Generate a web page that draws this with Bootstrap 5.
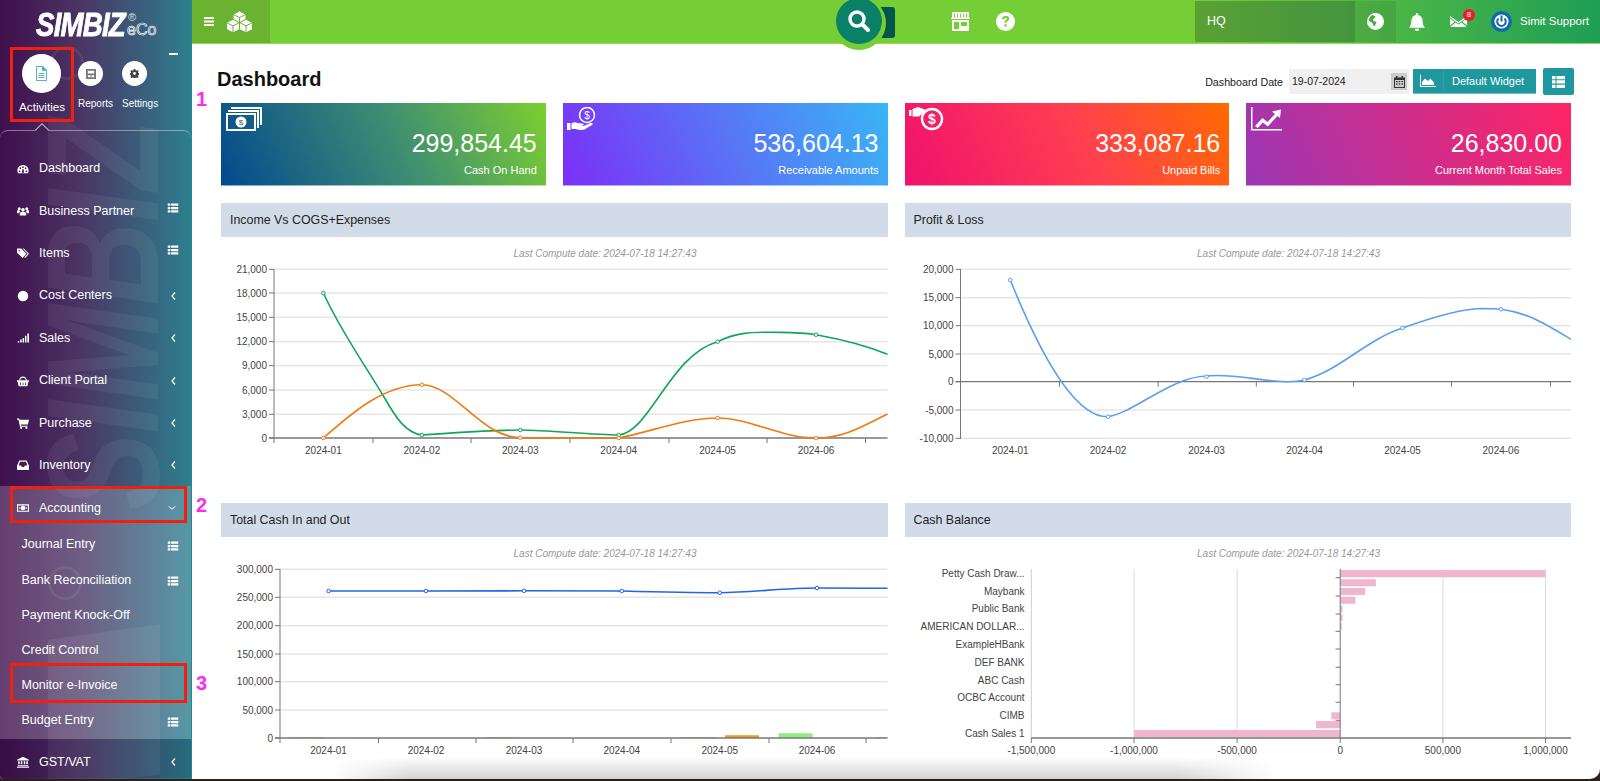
<!DOCTYPE html>
<html lang="en">
<head>
<meta charset="utf-8">
<title>Dashboard</title>
<link href="https://cdn.jsdelivr.net/npm/bootstrap@5.3.0/dist/css/bootstrap.min.css" rel="stylesheet">
<style>
html,body{height:781px;overflow:hidden;background:#2a2118;font-family:"Liberation Sans",Arial,sans-serif;}
svg{display:block;flex:none;}
.app-shell{height:779px;overflow:hidden;border-radius:0 0 10px 4px;background:#fff;}
.side-col{width:191px;flex:none;position:relative;overflow:hidden;color:#fff;background:linear-gradient(90deg,#3f0f4c 0%,#4a3564 42%,#2d7f8e 100%);}
.wm-word{position:absolute;left:23px;top:510px;font-size:160px;line-height:1;font-weight:700;font-style:italic;color:rgba(255,255,255,.06);transform-origin:0 0;transform:rotate(-90deg) scaleX(.72);white-space:nowrap;user-select:none;}
.wm-band{position:absolute;left:48px;top:632px;width:112px;height:150px;background:rgba(255,255,255,.07);transform:skewY(-8deg);}
.wm-ring{position:absolute;width:34px;height:34px;border-radius:50%;border:3px solid rgba(255,255,255,.07);}
.wm-ring-a{left:50px;top:46px;}
.wm-ring-b{left:48px;top:566px;}
.logo-wrap{height:47px;padding:9px 0 0 36px;position:relative;}
.logo-main{display:inline-block;font-size:33px;line-height:32px;font-weight:700;font-style:italic;letter-spacing:-1px;-webkit-text-stroke:.8px #fff;transform:scaleX(.84);transform-origin:0 0;}
.logo-eco{position:absolute;left:127px;top:21px;font-size:16px;line-height:17px;color:transparent;-webkit-text-stroke:.7px #fff;}
.logo-reg{position:absolute;left:128px;top:11px;font-size:11px;line-height:12px;color:#cfe3e6;}
.tab-row{padding-left:10px;height:75px;position:relative;}
.tab-on{width:64px;border:3px solid #f0200f;padding:4px 0 0 7px;}
.tab-off{padding-top:14px;}
.tab-round{background:#fff;border-radius:50%;display:flex;align-items:center;justify-content:center;}
.tab-big{width:39px;height:39px;margin-left:2px;}
.tab-small{width:25px;height:25px;}
.tab-lbl-big{font-size:11.7px;line-height:14px;margin-top:7px;margin-left:-1px;white-space:nowrap;}
.tab-lbl{font-size:10px;line-height:14px;margin-top:11px;white-space:nowrap;}
.tab-minus{width:8.5px;height:2px;background:#fff;margin:6px 0 0 10px;}
.menu-box{margin-top:8px;border-top:1px solid rgba(255,255,255,.4);border-radius:8px 8px 0 0;padding-top:15.5px;position:relative;}
.menu-box::before{content:"";position:absolute;left:36.5px;top:-6px;width:10px;height:10px;background:#42214f;border-left:1px solid rgba(255,255,255,.7);border-top:1px solid rgba(255,255,255,.7);transform:rotate(45deg);}
.menu-row{height:42.4px;padding:2px 12px 0 17px;font-size:12.5px;color:#fff;text-decoration:none;position:relative;}
.menu-row:hover{color:#fff;}
.menu-ico{width:12px;height:12px;margin-right:10px;}
.menu-end{margin-left:auto;}
.menu-row .menu-end{margin-bottom:7px;}
.sub-row .menu-end{margin-top:3px;}
.chev-end{margin-left:auto;margin-right:2px;}
.open-zone{background:rgba(255,255,255,.2);padding-bottom:2px;}
.menu-open{height:40px;padding-top:5px;}
.sub-row{height:35.2px;padding:3px 12px 0 21.5px;font-size:12.5px;color:#fff;text-decoration:none;position:relative;}
.sub-row:hover{color:#fff;}
.menu-last{height:39px;padding-top:8px;background:rgba(20,0,40,.15);}
.red-open::after,.red-sub::after{content:"";position:absolute;border:3px solid #ef2010;}
.red-open::after{inset:0 4.5px 2.4px 10px;}
.red-sub::after{inset:-3.7px 4.3px -1.2px 10px;}
.pink-num{position:absolute;left:196px;color:#fb2ee8;font-weight:700;font-size:20px;line-height:20px;z-index:5;}
.main-col{flex:1 1 auto;min-width:0;position:relative;border-left:1px solid #1e8a94;margin-left:0;}
.fade-low{position:absolute;left:0;right:0;bottom:0;height:22px;background:linear-gradient(to top,rgba(150,150,150,.42),rgba(150,150,150,0));-webkit-mask-image:linear-gradient(to right,transparent 10%,#000 15.500%,#000 70%,transparent 77%);mask-image:linear-gradient(to right,transparent 10%,#000 15.500%,#000 70%,transparent 77%);pointer-events:none;z-index:4;}
.top-strip{height:44px;color:#fff;background:linear-gradient(90deg,#76ce36 71%,#1f9e57 100%);border-bottom:1px solid #8ed85a;position:relative;}
.top-left{width:78px;height:43px;background:#6ab230;padding-left:12px;gap:12px;}
.top-hq{width:160px;height:41px;background:rgba(30,60,50,.3);font-size:12.5px;padding-left:12px;margin-left:180px;}
.top-globe{width:41px;height:41px;background:rgba(30,60,50,.12);}
.top-user{font-size:11.5px;margin-left:8px;white-space:nowrap;}
.env-wrap{position:relative;margin-left:24px;}
.env-badge{position:absolute;left:13px;top:-7px;width:12px;height:12px;border-radius:50%;background:#ee1c25;font-size:8px;line-height:12px;text-align:center;color:#fff;}
.search-disc{position:absolute;left:640px;top:-4px;width:54px;height:54px;border-radius:50%;background:#76ce36;z-index:3;}
.search-core{position:absolute;left:4px;top:2px;width:46px;height:46px;border-radius:50%;background:#0a8067;display:flex;align-items:center;justify-content:center;}
.search-tail{position:absolute;left:684px;top:7px;width:19px;height:31px;background:#03574a;border-radius:0 3px 3px 0;z-index:2;}
.page-body{padding:24px 29px 0 29px;}
.head-row{height:27px;margin-bottom:8px;}
.page-title{font-size:20px;font-weight:700;line-height:22px;margin:0 0 0 -4px;color:#111;}
.head-tools{margin-right:-3px;}
.date-lbl{font-size:10.7px;color:#222;margin-right:6px;margin-top:2px;}
.date-box{width:120px;height:25px;background:#f0f0f0;font-size:10.5px;color:#222;padding:0 2px 0 3px;}
.cal-sq{width:16px;height:17px;background:#ccc;margin-left:auto;display:flex;align-items:center;justify-content:center;}
.teal-btn{background:#1e979f;color:#fff;font-size:11px;height:25px;width:123px;margin-left:4px;border-bottom:1px solid #6fbcc2;}
.teal-ico{width:31px;height:24px;border-right:1px solid #2aa0a8;display:flex;align-items:center;justify-content:center;}
.teal-txt{padding-left:8px;white-space:nowrap;}
.teal-sq{width:31px;height:27px;background:#1e979f;border-radius:2px;margin-left:7px;display:flex;align-items:center;justify-content:center;}
.tight-row{--bs-gutter-x:17px;--bs-gutter-y:0;}
.stat-tile{height:83px;color:#fff;padding:4px 9px 0 4.5px;position:relative;border-bottom:1px solid rgba(255,255,255,.5);}
.tile-a{background:linear-gradient(65deg,#03498f,#3f8f72 55%,#7ccf2f);}
.tile-b{background:linear-gradient(65deg,#7b2ff7,#38b6f5);}
.tile-c{background:linear-gradient(65deg,#f0116e,#ff3f50 55%,#ff6a00);}
.tile-d{background:linear-gradient(65deg,#9b37b5,#ff2464);}
.tile-num{font-size:25px;line-height:30px;position:absolute;right:9px;top:25px;}
.tile-lbl{font-size:11px;line-height:14px;position:absolute;right:9px;top:60px;white-space:nowrap;}
.chart-title{height:34px;background:#d2dce8;font-size:12.4px;color:#222;padding-left:9px;margin-top:17px;}
.chart-area{width:100%;}
.ct{font-family:"Liberation Sans",Arial,sans-serif;font-size:10px;fill:#444;}
.cnote{font-family:"Liberation Sans",Arial,sans-serif;font-size:10px;font-style:italic;fill:#999;text-anchor:middle;}
</style>
</head>
<body>
<svg width="0" height="0" style="position:absolute">
<defs>
<symbol id="i-list" viewBox="0 0 16 16"><path fill="currentColor" d="M1 2h3.500v3H1zM5.500 2H15v3H5.500zM1 6.500h3.500v3H1zM5.500 6.500H15v3H5.500zM1 11h3.500v3H1zM5.500 11H15v3H5.500z"/></symbol>
<symbol id="i-gauge" viewBox="0 0 16 16"><path fill="currentColor" fill-rule="evenodd" d="M8 2.500a7.500 7.500 0 0 0-7.500 7.500c0 1.400.3 2.500.9 3.500h13.200c.6-1 .9-2.100.9-3.500A7.500 7.500 0 0 0 8 2.500zM7 4.500h2v2H7zM3.500 6h2v2h-2zM2.500 10h2v2h-2zM11.500 10h2v2h-2zM10.500 6h2v2h-2zM7.300 8h1.400l.8 5H6.500z"/></symbol>
<symbol id="i-users" viewBox="0 0 16 16"><path fill="currentColor" d="M8 4a2.400 2.400 0 1 1 0 4.800A2.400 2.400 0 0 1 8 4zM3 3a2 2 0 1 1 0 4 2 2 0 0 1 0-4zM13 3a2 2 0 1 1 0 4 2 2 0 0 1 0-4zM4.500 10c.7-.7 1.500-1 3.500-1s2.800.3 3.500 1c.6.600.8 2 .8 4H3.700c0-2 .2-3.400.8-4zM0 7.500c.5-.4 1.200-.5 3-.5.300.7.800 1.200 1.400 1.500C3.400 9 3 10 2.900 11H0zM16 7.500c-.5-.4-1.200-.5-3-.5-.3.7-.8 1.200-1.400 1.500 1 .5 1.400 1.500 1.500 2.500H16z"/></symbol>
<symbol id="i-tags" viewBox="0 0 16 16"><path fill="currentColor" fill-rule="evenodd" d="M0 2h5.500l7 7-5 5.500L0 7.500zM3 4a1 1 0 1 0 0 2 1 1 0 0 0 0-2zM7.500 2h1.500l7 7-5 5.500-1.200-1 4.200-4.500z"/></symbol>
<symbol id="i-dot" viewBox="0 0 16 16"><circle cx="8" cy="8" r="7" fill="currentColor"/></symbol>
<symbol id="i-signal" viewBox="0 0 16 16"><path fill="currentColor" d="M1 12h2v2H1zM4.200 10h2v4h-2zM7.400 8h2v6h-2zM10.600 5h2v9h-2zM13.800 2H16v12h-2.200z"/></symbol>
<symbol id="i-basket" viewBox="0 0 16 16"><path fill="currentColor" fill-rule="evenodd" d="M0 7h16v2h-1l-1.200 6H2.200L1 9H0zM4 10v3.500h1V10zM7.500 10v3.500h1V10zM11 10v3.500h1V10zM3 6.500C3.500 3.500 5.500 2 8 2s4.500 1.500 5 4.500h-1.500C11 4.500 9.800 3.500 8 3.500S5 4.500 4.500 6.500z"/></symbol>
<symbol id="i-cart" viewBox="0 0 16 16"><path fill="currentColor" d="M0 2h3l.4 1.500H16l-1.500 6.500H5l.3 1.500H14V13H4L2 3.500H0z"/><circle cx="5.500" cy="14.500" r="1.400" fill="currentColor"/><circle cx="12.500" cy="14.500" r="1.400" fill="currentColor"/></symbol>
<symbol id="i-inbox" viewBox="0 0 16 16"><path fill="currentColor" fill-rule="evenodd" d="M3 2h10l3 7v4.500a1 1 0 0 1-1 1H1a1 1 0 0 1-1-1V9zM4 3.500 2.200 8.500h3.300l1 2h3l1-2h3.300L12 3.500z"/></symbol>
<symbol id="i-money" viewBox="0 0 16 16"><path fill="currentColor" fill-rule="evenodd" d="M0 3h16v10H0zM1.500 4.500v7h13v-7zM8 5a3 3 0 1 1 0 6 3 3 0 0 1 0-6zM3 7h1.500v2H3zM11.500 7H13v2h-1.500z"/></symbol>
<symbol id="i-bank" viewBox="0 0 16 16"><path fill="currentColor" d="M8 1l8 4v1H0V5zM1.500 7h2v4h-2zM5 7h2v4H5zM9 7h2v4H9zM12.500 7h2v4h-2zM1 12h14v1H1zM0 14h16v1.500H0z"/></symbol>
<symbol id="i-back" viewBox="0 0 8 12"><path fill="none" stroke="currentColor" stroke-width="1.200" d="M6 2.500 3 6l3 3.500"/></symbol>
<symbol id="i-down" viewBox="0 0 12 8"><path fill="none" stroke="currentColor" stroke-width="1.200" d="M2 2l4 3.500L10 2"/></symbol>
</defs>
</svg>

<div class="app-shell d-flex">
  <aside class="side-col">
    <span class="wm-word" aria-hidden="true">SIMBIZ</span>
    <span class="wm-band"></span>
    <span class="wm-ring wm-ring-a"></span>
    <span class="wm-ring wm-ring-b"></span>
    <div class="logo-wrap">
      <span class="logo-main">SIMBIZ</span>
      <span class="logo-reg">®</span>
      <span class="logo-eco">eCo</span>
    </div>
    <div class="tab-row d-flex">
      <div class="tab-on d-flex flex-column align-items-start">
        <span class="tab-round tab-big">
          <svg width="13" height="15" viewBox="0 0 13 15"><path fill="#59b4c4" fill-rule="evenodd" d="M1 0h7l4 4v11H1zM2 1v13h9V5H7V1zM3.500 7v1h6V7zM3.500 9v1h6V9zM3.500 11v1h6v-1z"/></svg>
        </span>
        <span class="tab-lbl-big">Activities</span>
      </div>
      <div class="tab-off d-flex flex-column align-items-start ms-1" style="width:44px">
        <span class="tab-round tab-small">
          <svg width="10" height="10" viewBox="0 0 11 11"><path fill="#777" fill-rule="evenodd" d="M0 0h11v11H0zM2 2v3h7V2zM2 7v2h3V7zM6 7v2h3V7z"/></svg>
        </span>
        <span class="tab-lbl">Reports</span>
      </div>
      <div class="tab-off d-flex flex-column align-items-start" style="width:37px">
        <span class="tab-round tab-small">
          <svg width="9" height="9" viewBox="0 0 16 16"><path fill="#444" fill-rule="evenodd" d="M6.500 0h3l.4 2.300 1.500.6L13.300 1.600l2.100 2.100-1.300 1.900.6 1.500 2.300.4v3l-2.300.4-.6 1.500 1.300 1.900-2.100 2.100-1.900-1.300-1.500.6-.4 2.300h-3l-.4-2.300-1.500-.6-1.900 1.300L.6 14.300l1.300-1.900-.6-1.500L-1 10.500v-3l2.300-.4.6-1.500L.6 3.700 2.700 1.600l1.900 1.300 1.500-.6zM8 5.500a2.500 2.500 0 1 0 0 5 2.500 2.500 0 0 0 0-5z"/></svg>
        </span>
        <span class="tab-lbl">Settings</span>
      </div>
      <span class="tab-minus"></span>
    </div>
    <nav class="menu-box">
      <a class="menu-row d-flex align-items-center" href="#"><svg class="menu-ico"><use href="#i-gauge"/></svg>Dashboard</a>
      <a class="menu-row d-flex align-items-center" href="#"><svg class="menu-ico"><use href="#i-users"/></svg>Business Partner<svg class="menu-end" width="12" height="12"><use href="#i-list"/></svg></a>
      <a class="menu-row d-flex align-items-center" href="#"><svg class="menu-ico"><use href="#i-tags"/></svg>Items<svg class="menu-end" width="12" height="12"><use href="#i-list"/></svg></a>
      <a class="menu-row d-flex align-items-center" href="#"><svg class="menu-ico"><use href="#i-dot"/></svg>Cost Centers<svg class="chev-end" width="8" height="12"><use href="#i-back"/></svg></a>
      <a class="menu-row d-flex align-items-center" href="#"><svg class="menu-ico"><use href="#i-signal"/></svg>Sales<svg class="chev-end" width="8" height="12"><use href="#i-back"/></svg></a>
      <a class="menu-row d-flex align-items-center" href="#"><svg class="menu-ico"><use href="#i-basket"/></svg>Client Portal<svg class="chev-end" width="8" height="12"><use href="#i-back"/></svg></a>
      <a class="menu-row d-flex align-items-center" href="#"><svg class="menu-ico"><use href="#i-cart"/></svg>Purchase<svg class="chev-end" width="8" height="12"><use href="#i-back"/></svg></a>
      <a class="menu-row d-flex align-items-center" href="#"><svg class="menu-ico"><use href="#i-inbox"/></svg>Inventory<svg class="chev-end" width="8" height="12"><use href="#i-back"/></svg></a>
      <div class="open-zone">
        <a class="menu-row menu-open red-open d-flex align-items-center" href="#"><svg class="menu-ico"><use href="#i-money"/></svg>Accounting<svg class="chev-end" width="10" height="8"><use href="#i-down"/></svg></a>
        <a class="sub-row d-flex align-items-center" href="#">Journal Entry<svg class="menu-end" width="12" height="12"><use href="#i-list"/></svg></a>
        <a class="sub-row d-flex align-items-center" href="#">Bank Reconciliation<svg class="menu-end" width="12" height="12"><use href="#i-list"/></svg></a>
        <a class="sub-row d-flex align-items-center" href="#">Payment Knock-Off</a>
        <a class="sub-row d-flex align-items-center" href="#">Credit Control</a>
        <a class="sub-row red-sub d-flex align-items-center" href="#">Monitor e-Invoice</a>
        <a class="sub-row d-flex align-items-center" href="#">Budget Entry<svg class="menu-end" width="12" height="12"><use href="#i-list"/></svg></a>
      </div>
      <a class="menu-row menu-last d-flex align-items-center" href="#"><svg class="menu-ico"><use href="#i-bank"/></svg>GST/VAT<svg class="chev-end" width="8" height="12"><use href="#i-back"/></svg></a>
    </nav>
  </aside>

  <main class="main-col">
    <span class="pink-num" style="left:4px;top:89px">1</span>
    <span class="pink-num" style="left:4px;top:495px">2</span>
    <span class="pink-num" style="left:4px;top:673px">3</span>
    <header class="top-strip d-flex align-items-center">
      <div class="top-left d-flex align-items-center">
        <svg width="10" height="9" viewBox="0 0 10 9"><path fill="#fff" d="M0 0h10v2H0zM0 3.500h10v2H0zM0 7h10v2H0z"/></svg>
        <svg width="27" height="22" viewBox="0 0 27 22"><g fill="#fff" stroke="#6ab230" stroke-width="1"><path d="M13.500 0 20 3.300v6.900l-6.500 3.300L7 10.200V3.300z"/><path d="M7 8.300l6.500 3.300v6.900L7 21.800.5 18.500v-6.900z"/><path d="M20 8.300l6.500 3.300v6.900L20 21.800l-6.500-3.300v-6.900z"/><path fill="none" d="M7 3.300l6.500 3.300L20 3.300M13.500 6.600v6.900M.5 11.600 7 14.900l6.500-3.300M7 14.900v6.900M13.500 11.600l6.500 3.300 6.500-3.300M20 14.900v6.900"/></g></svg>
      </div>
      <svg style="margin-left:681px" width="19" height="19" viewBox="0 0 19 19"><path fill="#fff" fill-rule="evenodd" d="M1 0h17v5l1 2H0l1-2zM3 1.500v4h1v-4zM6 1.500v4h1v-4zM9 1.500v4h1v-4zM12 1.500v4h1v-4zM15 1.500v4h1v-4zM1 8h17v11H1zM3 10v7h5v-7zM10 10v4h6v-4z"/></svg>
      <svg style="margin-left:26px" width="19" height="19" viewBox="0 0 19 19"><path fill="#fff" fill-rule="evenodd" d="M9.500 0a9.500 9.500 0 1 1 0 19 9.500 9.500 0 0 1 0-19zM6 7.200h2.300c.1-1 .6-1.500 1.300-1.500.7 0 1.200.4 1.200 1 0 1.300-2.400 1.500-2.400 4.100h2.200c0-1.700 2.600-2 2.600-4.300C13.200 4.800 11.700 3.700 9.600 3.700 7.600 3.700 6.100 5 6 7.200zM8.400 12.300v2.300h2.200v-2.300z"/></svg>
      <div class="top-hq d-flex align-items-center">HQ</div>
      <div class="top-globe d-flex align-items-center justify-content-center">
        <svg width="17" height="17" viewBox="0 0 16 16"><path fill="#fff" fill-rule="evenodd" d="M8 0a8 8 0 1 1 0 16A8 8 0 0 1 8 0zM5 1.800C3 3 1.800 5 1.600 7.300c1 .1 1.600.7 2 1.500.8-.2 1.600.4 1.700 1.300.1.800 1 1.500 1.900 2.600.5-.8.300-1.600.9-2.400.9-.6 1-1.300.3-2-.8-.6-1.800-.3-2.300-1.100-.5-.8-.4-1.300.3-1.900.7-.6 1.600-.8 1.500-1.900C7 2.500 6 2.200 5 1.800z"/></svg>
      </div>
      <svg style="margin-left:12px" width="18" height="18" viewBox="0 0 16 16"><path fill="#fff" d="M8 0a1 1 0 0 1 1 1v.7c2.500.5 4 2.500 4 5 0 3.300.6 4.800 2 6.300H1c1.400-1.500 2-3 2-6.300 0-2.500 1.500-4.500 4-5V1a1 1 0 0 1 1-1zM6 14h4a2 2 0 0 1-4 0z"/></svg>
      <div class="env-wrap">
        <svg width="17" height="11" viewBox="0 0 17 11"><path fill="#fff" d="M0 0l8.500 6L17 0v1.500L8.500 7.500 0 1.500zM0 2.500l4.500 3.200L0 9.800zM17 2.500l-4.500 3.200 4.500 4.100zM5.500 6.500l3 2 3-2L16.500 11H.5z"/></svg>
        <span class="env-badge">8</span>
      </div>
      <svg style="margin-left:24px" width="21" height="21" viewBox="0 0 21 21"><circle cx="10.500" cy="10.500" r="10.500" fill="#1269ad"/><circle cx="10.500" cy="10.500" r="7" fill="#fff"/><path fill="none" stroke="#1269ad" stroke-width="2" d="M7.500 7.500a4.300 4.300 0 1 0 6 0M10.500 4.500v6"/></svg>
      <span class="top-user">Simit Support</span>
      <span class="search-tail"></span>
      <div class="search-disc">
        <span class="search-core">
          <svg width="24" height="24" viewBox="0 0 24 24"><circle cx="10" cy="10" r="7" fill="none" stroke="#fff" stroke-width="3.400"/><path stroke="#fff" stroke-width="4" stroke-linecap="round" d="M15.500 15.500 21 21"/></svg>
        </span>
      </div>
    </header>

    <div class="page-body">
      <div class="head-row d-flex align-items-start">
        <h1 class="page-title">Dashboard</h1>
        <div class="head-tools ms-auto d-flex align-items-center">
          <span class="date-lbl">Dashboard Date</span>
          <div class="date-box d-flex align-items-center">19-07-2024
            <span class="cal-sq"><svg width="11" height="12" viewBox="0 0 11 12"><path fill="#333" fill-rule="evenodd" d="M2 0h1.500v1.500h4V0H9v1.500h2V12H0V1.500h2zM1 4v7h9V4zM2 5h1.500v1.300H2zM4.700 5h1.500v1.300H4.700zM7.500 5H9v1.300H7.500zM2 7.500h1.500v1.300H2zM4.700 7.500h1.500v1.300H4.700zM7.500 7.500H9v1.300H7.500z"/></svg></span>
          </div>
          <div class="teal-btn d-flex align-items-center">
            <span class="teal-ico"><svg width="16" height="12" viewBox="0 0 16 12"><path fill="#fff" d="M0 0h1v11h15v1H0zM2 10V7l3-3.500 3 2.500 2.500-2.500L14 7.500V10z"/></svg></span>
            <span class="teal-txt">Default Widget</span>
          </div>
          <span class="teal-sq"><svg width="13" height="12" viewBox="0 0 13 12"><path fill="#fff" d="M0 0h3.500v3.300H0zM4.500 0H13v3.300H4.500zM0 4.300h3.500v3.300H0zM4.500 4.300H13v3.300H4.500zM0 8.700h3.500V12H0zM4.500 8.700H13V12H4.500z"/></svg></span>
        </div>
      </div>

      <div class="row tight-row">
        <div class="col-3"><div class="stat-tile tile-a">
          <svg width="36" height="24" viewBox="0 0 36 24"><path fill="#fff" fill-rule="evenodd" d="M5 0h31v18h-2V2H5zM2 3h31v18h-2V5H2zM0 6h30v18H0zM2 8v14h26V8zM15 9.500a5.500 5.500 0 1 1 0 11 5.500 5.500 0 0 1 0-11z"/><text x="15" y="18" text-anchor="middle" font-size="8" fill="#1f6a8a" font-family="Liberation Sans">$</text></svg>
          <span class="tile-num">299,854.45</span><span class="tile-lbl">Cash On Hand</span>
        </div></div>
        <div class="col-3"><div class="stat-tile tile-b">
          <svg width="29" height="24" viewBox="0 0 29 24"><circle cx="20" cy="8" r="7.500" fill="none" stroke="#fff" stroke-width="1.500"/><text x="20" y="11.500" text-anchor="middle" font-size="10" fill="#fff" font-family="Liberation Sans">$</text><path fill="#fff" d="M0 16h3.500v7H0zM4.500 16.500c2-1.500 4-1.500 6-.5l5 .5c1.500.2 1.500 2 0 2.200l-4 .2 5 .2 7-3c2-.5 3 1 1.500 2l-7.500 4.500c-3 .8-6 .2-9-.6H4.500z"/></svg>
          <span class="tile-num">536,604.13</span><span class="tile-lbl">Receivable Amounts</span>
        </div></div>
        <div class="col-3"><div class="stat-tile tile-c">
          <svg width="35" height="25" viewBox="0 0 35 25"><path fill="#fff" d="M0 3h2.500v6H0zM3.500 2 9 0l8 3-2 3.500-2 .5-3 2.500H3.500z"/><circle cx="23" cy="12" r="10" fill="none" stroke="#fff" stroke-width="2.400"/><text x="23" y="17" text-anchor="middle" font-size="14" font-weight="700" fill="#fff" font-family="Liberation Sans">$</text></svg>
          <span class="tile-num">333,087.16</span><span class="tile-lbl">Unpaid Bills</span>
        </div></div>
        <div class="col-3"><div class="stat-tile tile-d">
          <svg width="31" height="24" viewBox="0 0 31 24"><path fill="#fff" d="M0 0h1.500v22H31v1.500H0z"/><path fill="#fff" d="M4 19l7.500-8 5 4L24 7l-3-2.500L30 2.500 29 11l-2.500-2L16.800 19.500l-5-4L6.800 21z"/></svg>
          <span class="tile-num">26,830.00</span><span class="tile-lbl">Current Month Total Sales</span>
        </div></div>
      </div>

      <div class="row tight-row">
        <div class="col-6">
          <div class="chart-title d-flex align-items-center">Income Vs COGS+Expenses</div>
          <svg class="chart-area" height="249" viewBox="221 237 666.500 249">
            <text class="cnote" x="605" y="256.500">Last Compute date: 2024-07-18 14:27:43</text>
            <g stroke="#e6e6e6" stroke-width="1.500"><path d="M274 269.300H887.500M274 293H887.500M274 317.300H887.500M274 341.700H887.500M274 365.700H887.500M274 390H887.500M274 414.300H887.500"/></g>
            <g stroke="#777" fill="none"><path d="M274 269v174M269 269.300h5M269 293h5M269 317.300h5M269 341.700h5M269 365.700h5M269 390h5M269 414.300h5M269 438h5"/><path stroke-width="1.300" d="M269 438H887.500"/><path d="M373 438v5M471 438v5M570 438v5M669 438v5M767 438v5M865.500 438v5"/></g>
            <g class="ct" text-anchor="end"><text x="267" y="272.800">21,000</text><text x="267" y="296.500">18,000</text><text x="267" y="320.800">15,000</text><text x="267" y="345.200">12,000</text><text x="267" y="369.200">9,000</text><text x="267" y="393.500">6,000</text><text x="267" y="417.800">3,000</text><text x="267" y="441.500">0</text></g>
            <g class="ct" text-anchor="middle"><text x="323.400" y="453.500">2024-01</text><text x="421.900" y="453.500">2024-02</text><text x="520.300" y="453.500">2024-03</text><text x="618.700" y="453.500">2024-04</text><text x="717.600" y="453.500">2024-05</text><text x="816" y="453.500">2024-06</text></g>
            <path fill="none" stroke="#12a55a" stroke-width="1.600" d="M323.400 293C340 330 365 365 384 397C395 416 405 433 421.900 435C455 433 490 430 520.300 430C550 430 590 435 618.700 435C650 432 670 355 717.600 341.700C735 333 750 332 770 332.300C790 332.500 800 332 816 334.700C840 339 865 345 887.500 354.300"/>
            <path fill="none" stroke="#f07a10" stroke-width="1.600" d="M323.400 438C355 410 385 385 421.900 384.700C455 385 480 437 520.300 437.700L618.700 438C650 432 685 418 717.600 418C750 418 780 438 816 438C845 438 865 425 887.500 414"/>
            <g fill="#fff" stroke="#12a55a"><circle cx="323.400" cy="293" r="1.800"/><circle cx="421.900" cy="435" r="1.800"/><circle cx="520.300" cy="430" r="1.800"/><circle cx="618.700" cy="435" r="1.800"/><circle cx="717.600" cy="341.700" r="1.800"/><circle cx="816" cy="334.700" r="1.800"/></g>
            <g fill="#fff" stroke="#f07a10"><circle cx="323.400" cy="438" r="1.800"/><circle cx="421.900" cy="384.700" r="1.800"/><circle cx="520.300" cy="437.700" r="1.800"/><circle cx="618.700" cy="438" r="1.800"/><circle cx="717.600" cy="418" r="1.800"/><circle cx="816" cy="438" r="1.800"/></g>
          </svg>
        </div>
        <div class="col-6">
          <div class="chart-title d-flex align-items-center">Profit &amp; Loss</div>
          <svg class="chart-area" height="249" viewBox="904.500 237 666.500 249">
            <text class="cnote" x="1288" y="256.500">Last Compute date: 2024-07-18 14:27:43</text>
            <path stroke="#e6e6e6" stroke-width="1.500" d="M960 269.300H1571M960 297.700H1571M960 325.700H1571M960 354H1571M960 410H1571M960 438.300H1571"/>
            <g stroke="#777" fill="none"><path d="M960 269v170M955 269.300h5M955 297.700h5M955 325.700h5M955 354h5M955 381.700h5M955 410h5M955 438.300h5"/><path stroke-width="1.300" d="M955 381.700H1571"/><path d="M1059 381.700v5M1157.600 381.700v5M1255.800 381.700v5M1353 381.700v5M1451 381.700v5M1550 381.700v5"/></g>
            <g class="ct" text-anchor="end"><text x="953" y="272.800">20,000</text><text x="953" y="301.200">15,000</text><text x="953" y="329.200">10,000</text><text x="953" y="357.500">5,000</text><text x="953" y="385.200">0</text><text x="953" y="413.500">-5,000</text><text x="953" y="441.800">-10,000</text></g>
            <g class="ct" text-anchor="middle"><text x="1009.800" y="453.500">2024-01</text><text x="1107.600" y="453.500">2024-02</text><text x="1206" y="453.500">2024-03</text><text x="1304" y="453.500">2024-04</text><text x="1402" y="453.500">2024-05</text><text x="1500.400" y="453.500">2024-06</text></g>
            <path fill="none" stroke="#5a9fee" stroke-width="1.600" d="M1009.800 280C1040 355 1075 418 1107.600 416.700C1135 412 1170 377 1206 376C1230 373 1260 381 1285 381.700C1295 382 1300 381 1304 380C1340 370 1365 340 1402 328C1430 318 1460 309 1480 308.500C1490 308.500 1495 308.500 1500.400 309.300C1530 313 1550 327 1571 339.700"/>
            <g fill="#fff" stroke="#5a9fee"><circle cx="1009.800" cy="280" r="1.800"/><circle cx="1107.600" cy="416.700" r="1.800"/><circle cx="1206" cy="376.700" r="1.800"/><circle cx="1304" cy="380" r="1.800"/><circle cx="1402" cy="328" r="1.800"/><circle cx="1500.400" cy="309.300" r="1.800"/></g>
          </svg>
        </div>
        <div class="col-6">
          <div class="chart-title d-flex align-items-center">Total Cash In and Out</div>
          <svg class="chart-area" height="244" viewBox="221 537 666.500 244">
            <text class="cnote" x="605" y="556.500">Last Compute date: 2024-07-18 14:27:43</text>
            <path stroke="#e6e6e6" stroke-width="1.500" d="M280 569.300H887.500M280 597.300H887.500M280 625.700H887.500M280 654H887.500M280 681.700H887.500M280 710H887.500"/>
            <g fill="#90ee80"><path d="M289.600 737h34.700v1h-34.700zM484 737.300h34.700v.7H484zM681 737h35v1h-35zM778.700 733.300h33.900v4.700h-33.900zM876 737h11.500v1H876z"/></g>
            <path fill="#f0991f" d="M725 735.300h34v2.700h-34z"/>
            <g stroke="#777" fill="none"><path d="M280 569v174M275 569.300h5M275 597.300h5M275 625.700h5M275 654h5M275 681.700h5M275 710h5M275 738h5"/><path stroke-width="1.300" d="M275 738H887.500"/><path d="M378.500 738v5M476 738v5M573 738v5M671 738v5M769 738v5M866 738v5"/></g>
            <g class="ct" text-anchor="end"><text x="273" y="572.800">300,000</text><text x="273" y="600.800">250,000</text><text x="273" y="629.200">200,000</text><text x="273" y="657.500">150,000</text><text x="273" y="685.200">100,000</text><text x="273" y="713.500">50,000</text><text x="273" y="741.500">0</text></g>
            <g class="ct" text-anchor="middle"><text x="328.600" y="753.500">2024-01</text><text x="426" y="753.500">2024-02</text><text x="524" y="753.500">2024-03</text><text x="621.800" y="753.500">2024-04</text><text x="719.800" y="753.500">2024-05</text><text x="817" y="753.500">2024-06</text></g>
            <path fill="none" stroke="#2563eb" stroke-width="1.600" d="M328.600 591L426 591L524 590.800L621.800 591C660 592 690 592.700 719.800 592.700C750 592.500 785 588 817 588C845 588 865 588.300 887.500 588.300"/>
            <g fill="#fff" stroke="#2563eb"><circle cx="328.600" cy="591" r="1.800"/><circle cx="426" cy="591" r="1.800"/><circle cx="524" cy="590.800" r="1.800"/><circle cx="621.800" cy="591" r="1.800"/><circle cx="719.800" cy="592.700" r="1.800"/><circle cx="817" cy="588" r="1.800"/></g>
          </svg>
        </div>
        <div class="col-6">
          <div class="chart-title d-flex align-items-center">Cash Balance</div>
          <svg class="chart-area" height="244" viewBox="904.500 537 666.500 244">
            <text class="cnote" x="1288" y="556.500">Last Compute date: 2024-07-18 14:27:43</text>
            <path stroke="#dcdcdc" d="M1133.500 569v169M1236.600 569v169M1442.400 569v169M1545 569v169"/>
            <g fill="#efb6cf"><path d="M1339.700 570H1545v7.300h-205.300zM1339.700 579.300h35.700v7h-35.700zM1339.700 588h25v7h-25zM1339.700 596.700H1355v7h-15.300zM1339.700 605.500h2.300v7h-2.300zM1339.700 614.300h2.300v7h-2.300zM1339.700 623h1.500v7h-1.500zM1339.700 632h.7v7h-.7zM1330.800 712.300h8.900v7h-8.900zM1315.600 721h24.100v7.300h-24.100zM1133.500 730h206.200v7.300h-206.200z"/></g>
            <path stroke="#ccc" d="M1030.800 569v169"/>
            <g stroke="#777" fill="none"><path d="M1339.700 569v169M1335 577.700h5M1335 596h5M1335 614h5M1335 631.300h5M1335 649h5M1335 667.300h5M1335 684.700h5M1335 702.300h5M1335 720.300h5"/><path stroke-width="1.300" d="M1030.800 738H1571"/><path d="M1030.800 738v5M1133.500 738v5M1236.600 738v5M1339.700 738v5M1442.400 738v5M1545 738v5"/></g>
            <g class="ct" text-anchor="end"><text x="1024" y="576.500">Petty Cash Draw...</text><text x="1024" y="594.800">Maybank</text><text x="1024" y="612.200">Public Bank</text><text x="1024" y="629.500">AMERICAN DOLLAR...</text><text x="1024" y="647.800">ExampleHBank</text><text x="1024" y="665.500">DEF BANK</text><text x="1024" y="683.500">ABC Cash</text><text x="1024" y="701.200">OCBC Account</text><text x="1024" y="718.500">CIMB</text><text x="1024" y="736.800">Cash Sales 1</text></g>
            <g class="ct" text-anchor="middle"><text x="1030.800" y="753.500">-1,500,000</text><text x="1133.500" y="753.500">-1,000,000</text><text x="1236.600" y="753.500">-500,000</text><text x="1339.700" y="753.500">0</text><text x="1442.400" y="753.500">500,000</text><text x="1545" y="753.500">1,000,000</text></g>
          </svg>
        </div>
      </div>
    </div>
    <span class="fade-low"></span>
  </main>
</div>
<script src="https://cdn.jsdelivr.net/npm/bootstrap@5.3.0/dist/js/bootstrap.bundle.min.js"></script>
</body>
</html>
